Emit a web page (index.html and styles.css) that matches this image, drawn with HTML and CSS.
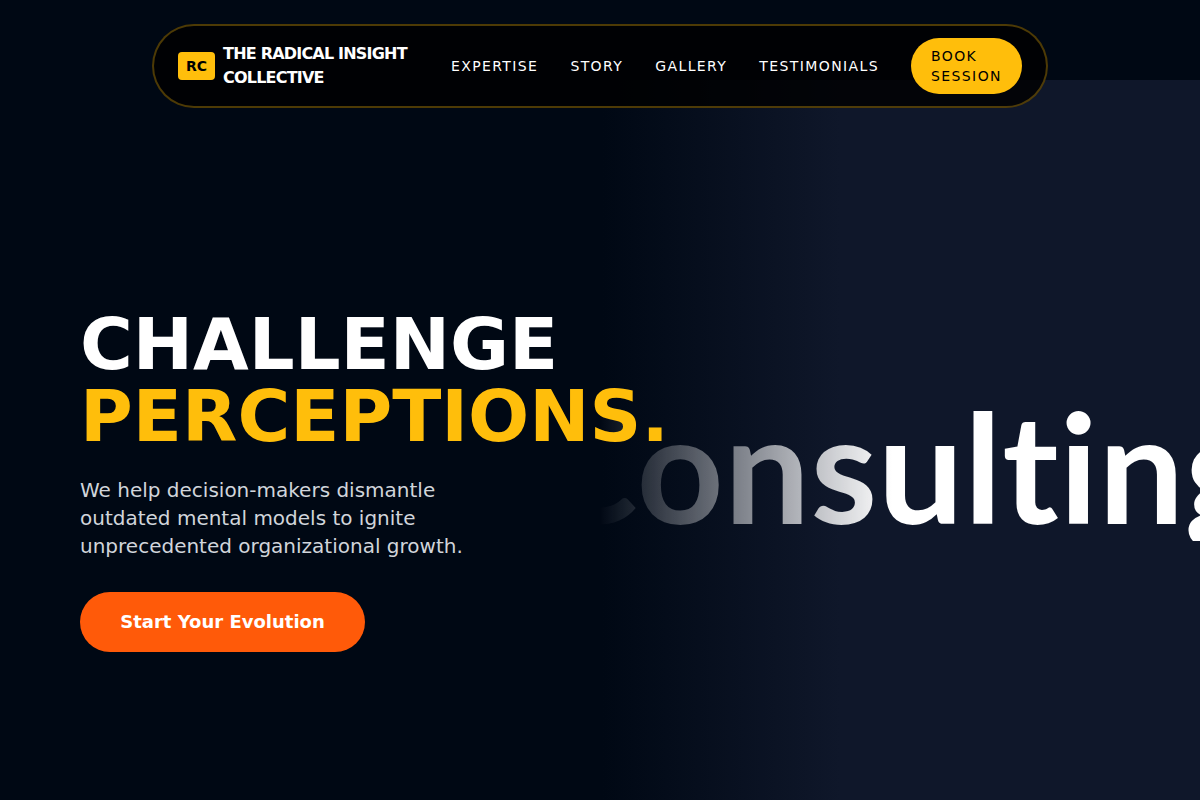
FILE: index.html
```html
<!DOCTYPE html>
<html lang="en">
<head>
<meta charset="utf-8">
<title>The Radical Insight Collective</title>
<link rel="stylesheet" href="styles.css">
</head>
<body>
<div class="page">
  <div class="visual">
    <div class="word">Consulting</div>
  </div>
  <header class="nav">
    <div class="brand">
      <span class="badge">RC</span>
      <span class="brand-name">THE RADICAL INSIGHT COLLECTIVE</span>
    </div>
    <nav class="links">
      <a>EXPERTISE</a>
      <a>STORY</a>
      <a>GALLERY</a>
      <a>TESTIMONIALS</a>
    </nav>
    <a class="book">BOOK SESSION</a>
  </header>
  <main class="hero">
    <h1><span>CHALLENGE</span><span class="accent">PERCEPTIONS.</span></h1>
    <p>We help decision-makers dismantle outdated mental models to ignite unprecedented organizational growth.</p>
    <a class="cta">Start Your Evolution</a>
  </main>
</div>
</body>
</html>
```
FILE: styles.css
```css
* { box-sizing: border-box; }
html, body { margin: 0; height: 100%; }
body { background: #000814; font-family: "DejaVu Sans", sans-serif; color: #fff; overflow: hidden; }
.page { position: relative; width: 1200px; height: 800px; overflow: hidden; background: #000814; }
.visual { position: absolute; left: 480px; top: 80px; width: 720px; height: 720px; background: linear-gradient(90deg, #000814 17%, #0f172a 50%); display: flex; align-items: center; overflow: hidden; }
.word { font-family: "Lato", sans-serif; font-weight: 700; font-size: 152px; letter-spacing: .5px; line-height: 1; white-space: nowrap; margin-left: 57px; margin-top: 50px; color: transparent; background: linear-gradient(90deg, transparent 62px, #fff 355px); -webkit-background-clip: text; background-clip: text; }
.nav { position: absolute; left: 152px; top: 24px; width: 896px; height: 84px; border: 2px solid rgba(255,190,11,.3); border-radius: 42px; background: rgba(0,0,0,.8); display: flex; align-items: center; padding: 0 24px; }
.brand { display: flex; align-items: center; gap: 8px; width: 249px; }
.badge { background: #ffbe0b; color: #000; font-weight: 700; font-size: 14px; padding: 0 8px; height: 28px; line-height: 28px; border-radius: 4px; }
.brand-name { font-weight: 700; font-size: 16px; line-height: 24px; letter-spacing: -.8px; width: 200px; }
.links { display: flex; gap: 32px; margin-left: 24px; }
.links a { font-size: 14px; letter-spacing: 1.4px; color: #fff; }
.book { margin-left: 32px; width: 111px; height: 56px; background: #ffbe0b; color: #000; border-radius: 28px; padding: 8px 20px; font-size: 14px; line-height: 20px; letter-spacing: 1.4px; }
.hero { position: absolute; left: 80px; top: 308px; width: 600px; }
h1 { margin: 0; font-size: 72px; line-height: 72px; font-weight: 700; letter-spacing: 0; }
h1 span { display: block; }
.accent { color: #ffbe0b; }
p { margin: 24px 0 0; width: 400px; font-size: 20px; line-height: 28px; color: #d1d5db; }
.cta { display: inline-block; margin-top: 32px; width: 285px; height: 60px; line-height: 60px; text-align: center; background: #ff5a09; border-radius: 30px; font-weight: 700; font-size: 18px; color: #fff; }
```
